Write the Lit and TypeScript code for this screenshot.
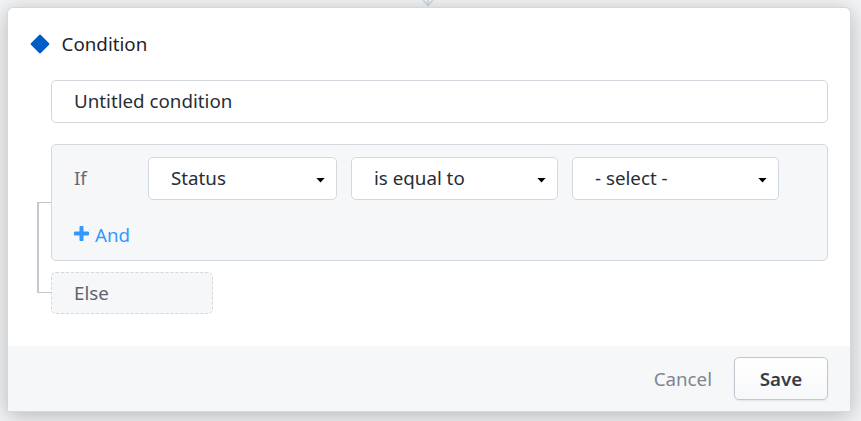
import { LitElement, html, css } from "lit";
import { customElement, property } from "lit/decorators.js";

@customElement("select-box")
class SelectBox extends LitElement {
  @property() label = "";
  static styles = css`
    :host {
      display: flex;
      align-items: center;
      justify-content: space-between;
      box-sizing: border-box;
      height: 43px;
      padding: 0 11px 0 22px;
      border: 1px solid #d3d8de;
      border-radius: 5px;
      background: #fff;
      color: #272d35;
    }
    span { margin-top: -1px; }
    svg { display: block; margin-top: 4px; }
  `;
  render() {
    return html`<span>${this.label}</span>
      <svg width="9" height="5" viewBox="0 0 9 5"><path d="M.4 0H8.6L4.5 4.4Z" fill="#000" /></svg>`;
  }
}

@customElement("app-root")
class AppRoot extends LitElement {
  static styles = css`
    :host {
      display: block;
      box-sizing: border-box;
      position: relative;
      width: 861px;
      height: 421px;
      padding: 7px 0 0 7px;
      overflow: hidden;
      background: #f3f4f6;
      font: 400 18.75px/24px "Noto Sans", sans-serif;
      color: #1f2328;
    }
    .arrow { position: absolute; left: 421px; top: 0; }
    .card {
      position: relative;
      box-sizing: border-box;
      display: flex;
      flex-direction: column;
      width: 844px;
      height: 405px;
      border: 1px solid #d3d8de;
      border-bottom-color: #d6d9dd;
      border-radius: 6px 6px 3px 3px;
      background: #fff;
      box-shadow: 0 4px 22px rgba(0, 0, 0, 0.25);
      overflow: hidden;
    }
    .title { display: flex; align-items: center; height: 72px; padding-left: 21px; gap: 10.6px; }
    .title svg { display: block; }
    .name {
      box-sizing: border-box;
      height: 43px;
      margin: 0 22px 0 43px;
      padding: 8px 22px;
      border: 1px solid #d3d8de;
      border-radius: 5px;
      color: #272d35;
    }
    .rules { display: flex; margin: 21px 22px 0 29px; }
    .link {
      box-sizing: border-box;
      width: 14px;
      height: 91px;
      margin-top: 58px;
      border: solid #c3c9d1;
      border-width: 1px 0 1px 2px;
      flex: none;
    }
    .branches { flex: 1; }
    .if {
      box-sizing: border-box;
      height: 117px;
      padding: 12px 0 0 22px;
      border: 1px solid #d3d8de;
      border-radius: 5px;
      background: #f6f7f9;
    }
    .row { display: flex; align-items: center; color: #666973; }
    .if-label { width: 74px; margin-top: -1px; }
    .s1 { width: 189px; margin-right: 14px; }
    .s2 { width: 207px; margin-right: 14px; }
    .s3 { width: 207px; }
    .and { display: flex; align-items: center; gap: 6px; margin-top: 23px; color: #3399ff; }
    .and svg { display: block; margin-top: -3px; }
    .else {
      box-sizing: border-box;
      width: 162px;
      height: 42px;
      margin-top: 11px;
      padding: 8px 22px;
      border: 1px dashed #d3d8de;
      border-radius: 5px;
      background: #f6f7f9;
      color: #5f646e;
    }
    .footer {
      display: flex;
      align-items: center;
      justify-content: flex-end;
      gap: 22px;
      height: 65px;
      margin-top: auto;
      padding-right: 22px;
      background: #f6f7f9;
      color: #80858f;
    }
    .save {
      box-sizing: border-box;
      width: 94px;
      height: 43px;
      padding: 0;
      border: 1px solid #c1c7d0;
      border-radius: 5px;
      background: linear-gradient(#fff, #f7f8fa);
      box-shadow: 0 1px 2px rgba(0, 0, 0, 0.08);
      font: 600 18.75px/24px "Noto Sans", sans-serif;
      color: #363d47;
    }
  `;
  render() {
    return html`
      <svg class="arrow" width="14" height="7" viewBox="0 0 14 7" fill="none" stroke="#d0d7dd" stroke-width="1.6">
        <path d="M7 0V5M2 0L7 5.5L12 0" />
      </svg>
      <div class="card">
        <div class="title">
          <svg width="22" height="22" viewBox="0 0 22 22">
            <rect x="4" y="4" width="14" height="14" rx="1.2" transform="rotate(45 11 11)" fill="#005cc5" />
          </svg>
          <span>Condition</span>
        </div>
        <div class="name">Untitled condition</div>
        <div class="rules">
          <div class="link"></div>
          <div class="branches">
            <div class="if">
              <div class="row">
                <span class="if-label">If</span>
                <select-box class="s1" label="Status"></select-box>
                <select-box class="s2" label="is equal to"></select-box>
                <select-box class="s3" label="- select -"></select-box>
              </div>
              <div class="and">
                <svg width="15" height="15" viewBox="0 0 15 15"><path d="M7.5 1.5V13.5M1.5 7.5H13.5" stroke="#3399ff" stroke-width="4" stroke-linecap="round" /></svg>
                <span>And</span>
              </div>
            </div>
            <div class="else">Else</div>
          </div>
        </div>
        <div class="footer"><span>Cancel</span><button class="save">Save</button></div>
      </div>`;
  }
}
